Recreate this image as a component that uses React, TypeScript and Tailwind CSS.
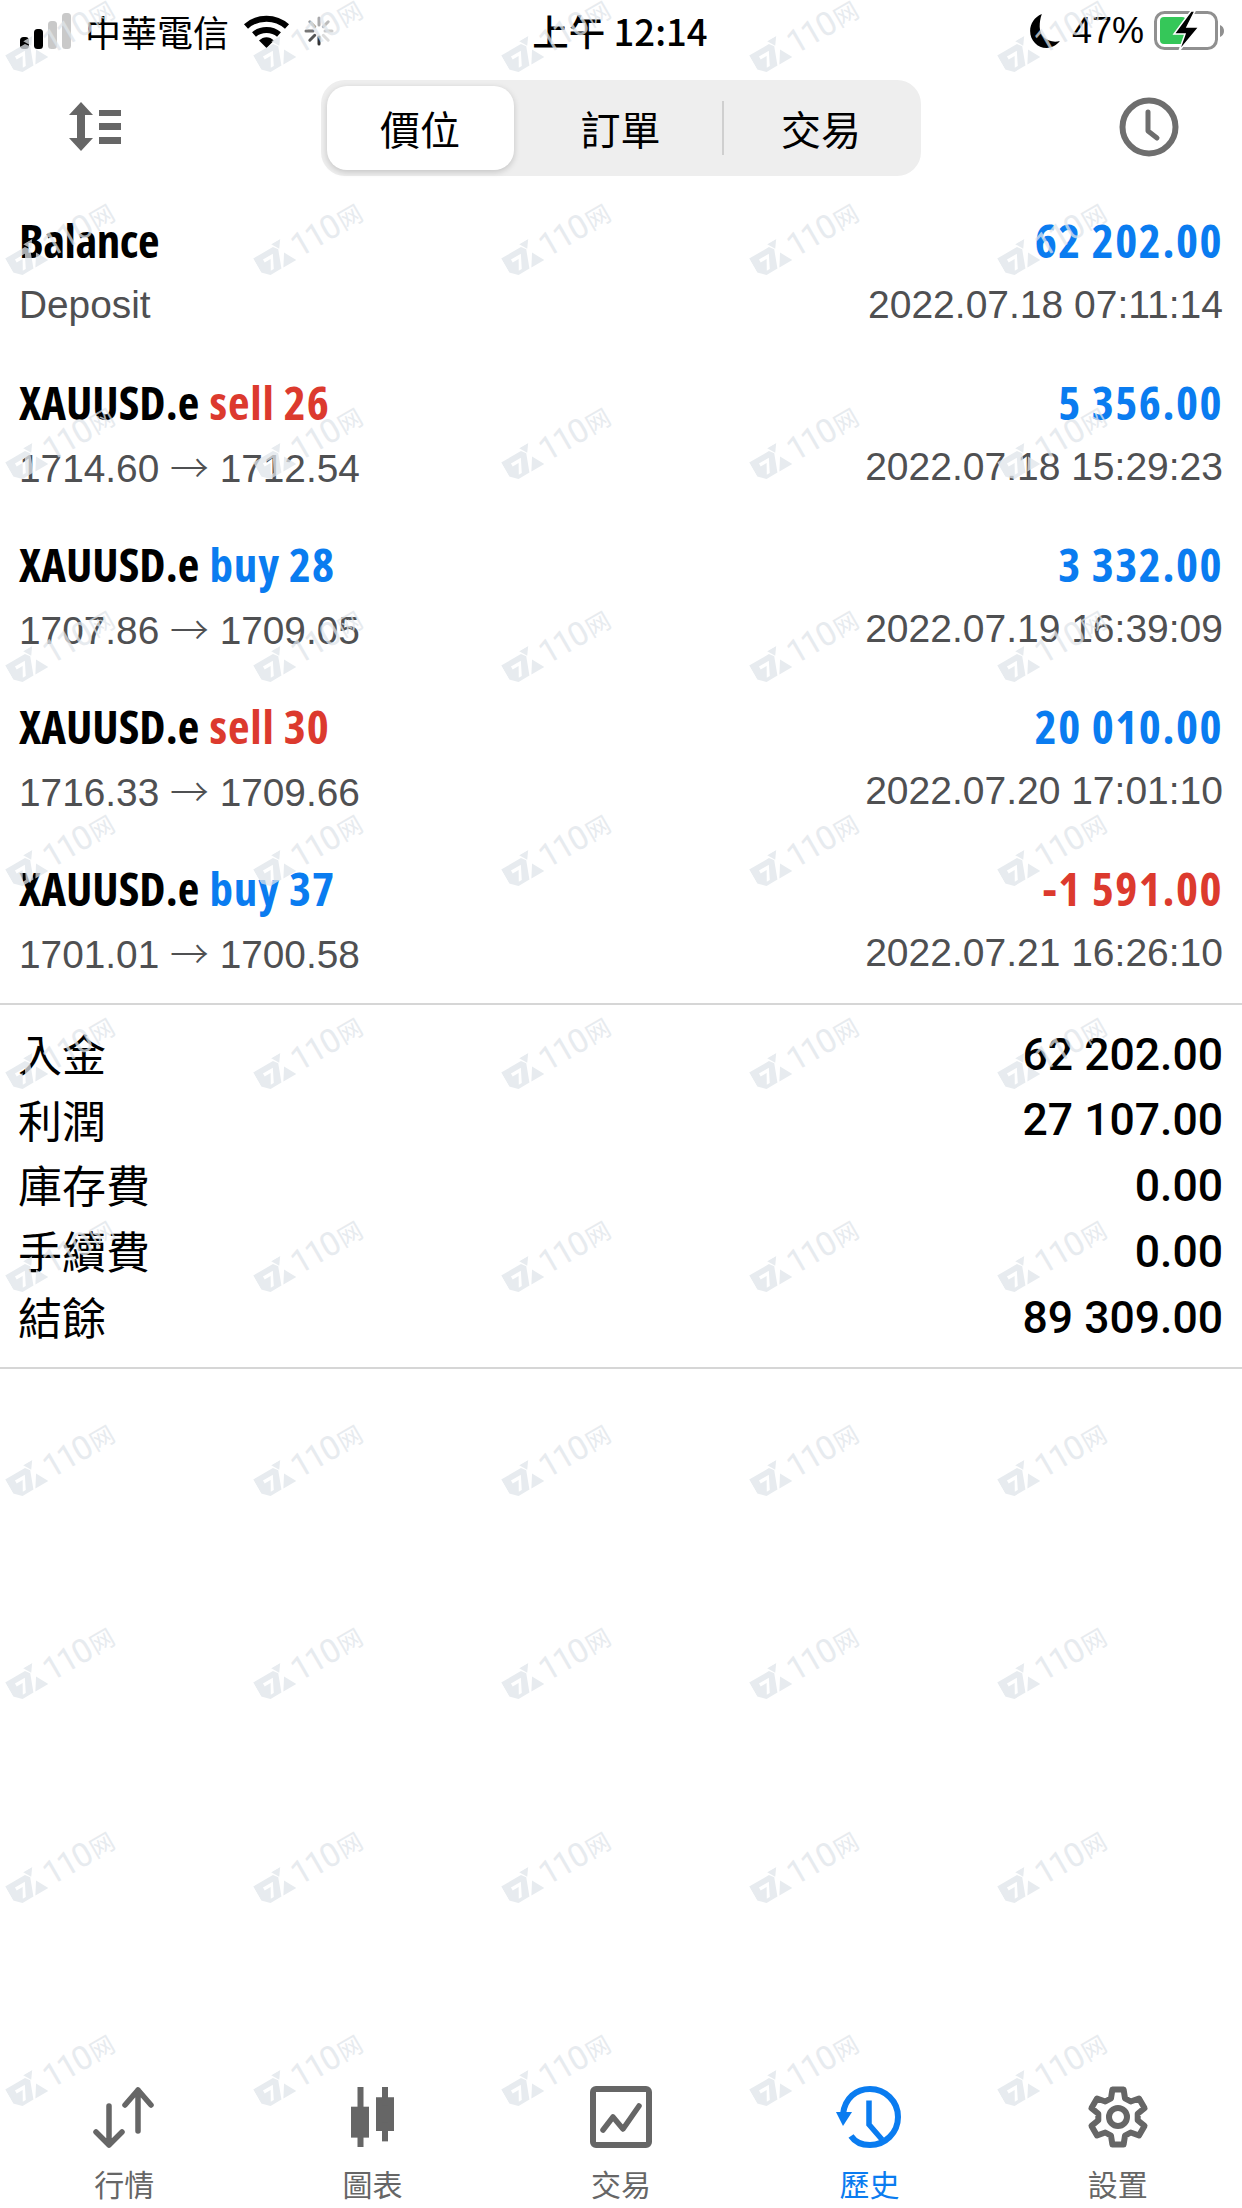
import { Fragment } from 'react';

const sans = "font-['Liberation_Sans','Noto_Sans_CJK_TC',sans-serif]";
const cjk = "font-['Noto_Sans_CJK_TC',sans-serif]";

type Trade = {
  symbol: string;
  side?: string;
  sideColor?: string;
  amount: string;
  amountColor: string;
  from?: string;
  to?: string;
  sub?: string;
  time: string;
};

const trades: Trade[] = [
  { symbol: 'Balance', amount: '62 202.00', amountColor: 'text-[#0a7cf0]', sub: 'Deposit', time: '2022.07.18 07:11:14' },
  { symbol: 'XAUUSD.e', side: 'sell 26', sideColor: 'text-[#dc3a2e]', amount: '5 356.00', amountColor: 'text-[#0a7cf0]', from: '1714.60', to: '1712.54', time: '2022.07.18 15:29:23' },
  { symbol: 'XAUUSD.e', side: 'buy 28', sideColor: 'text-[#0a7cf0]', amount: '3 332.00', amountColor: 'text-[#0a7cf0]', from: '1707.86', to: '1709.05', time: '2022.07.19 16:39:09' },
  { symbol: 'XAUUSD.e', side: 'sell 30', sideColor: 'text-[#dc3a2e]', amount: '20 010.00', amountColor: 'text-[#0a7cf0]', from: '1716.33', to: '1709.66', time: '2022.07.20 17:01:10' },
  { symbol: 'XAUUSD.e', side: 'buy 37', sideColor: 'text-[#0a7cf0]', amount: '-1 591.00', amountColor: 'text-[#dc3a2e]', from: '1701.01', to: '1700.58', time: '2022.07.21 16:26:10' },
];

const summary = [
  ['入金', '62 202.00'],
  ['利潤', '27 107.00'],
  ['庫存費', '0.00'],
  ['手續費', '0.00'],
  ['結餘', '89 309.00'],
];

function gearPath(cx: number, cy: number, outer: number, inner: number) {
  const pts: string[] = [];
  for (let i = 0; i < 6; i++) {
    const a = (i * Math.PI) / 3 - Math.PI / 2;
    const at = (r: number, d: number) => `${(cx + r * Math.cos(a + d)).toFixed(1)} ${(cy + r * Math.sin(a + d)).toFixed(1)}`;
    pts.push(at(inner, -0.36), at(outer, -0.2), at(outer, 0.2), at(inner, 0.36));
  }
  return `M${pts.join('L')}Z`;
}

function SignalIcon() {
  return (
    <svg width="54" height="36" viewBox="0 0 54 36">
      <rect x="0" y="24" width="9" height="12" rx="3.5" fill="#000" />
      <rect x="14" y="16" width="9" height="20" rx="3.5" fill="#000" />
      <rect x="28" y="8" width="9" height="28" rx="3.5" fill="#c9c9c9" />
      <rect x="42" y="0" width="9" height="36" rx="3.5" fill="#c9c9c9" />
    </svg>
  );
}

function WifiIcon() {
  return (
    <svg width="47" height="34" viewBox="0 0 47 34">
      <path d="M3 12.5C14.5 2 32.5 2 44 12.5" fill="none" stroke="#000" strokeWidth="6" />
      <path d="M11 20.5C18 14.5 29 14.5 36 20.5" fill="none" stroke="#000" strokeWidth="6" />
      <path d="M16 26.5C20.5 22 26.5 22 31 26.5L23.5 34Z" fill="#000" />
    </svg>
  );
}

function SpinnerIcon() {
  const shades = ['#333', '#555', '#777', '#999', '#aaa', '#bbb', '#ccc', '#ddd'];
  return (
    <svg width="30" height="30" viewBox="-15 -15 30 30">
      {shades.map((c, i) => (
        <line key={i} x1="0" y1="-6" x2="0" y2="-13" stroke={c} strokeWidth="3" strokeLinecap="round" transform={`rotate(${180 + i * 45})`} />
      ))}
    </svg>
  );
}

function MoonIcon() {
  return (
    <svg width="30" height="34" viewBox="0 0 28 32">
      <path d="M11 0C4 3 0 9 0 16c0 9 7 16 15.500 16 5 0 9.500-2.500 12.500-6.500-1.500.5-3 .5-4.500.5C15.500 26 9 20 9 12c0-4 .5-8 2-12Z" fill="#000" />
    </svg>
  );
}

function BatteryIcon() {
  return (
    <svg width="70" height="40" viewBox="0 0 70 40">
      <rect x="1.500" y="1.500" width="61" height="36" rx="9" fill="none" stroke="#909090" strokeWidth="3" />
      <rect x="6" y="6" width="26" height="27" rx="4" fill="#35c759" />
      <path d="M66 14c2.500 1 4 3 4 6s-1.500 5-4 6Z" fill="#909090" />
      <path d="M37 0 20 23h11l-6 17 20-24H33l8-16Z" fill="#000" stroke="#fff" strokeWidth="1.500" />
    </svg>
  );
}

function SortIcon() {
  return (
    <svg width="54" height="49" viewBox="0 0 54 49">
      <path d="M13 0l12 13H17v23h8L13 49 1 36h8V13H1Z" fill="#666" />
      <rect x="31" y="8" width="22" height="6" fill="#666" />
      <rect x="31" y="21" width="22" height="7" fill="#666" />
      <rect x="31" y="35" width="22" height="7" fill="#666" />
    </svg>
  );
}

function ClockIcon() {
  return (
    <svg width="60" height="60" viewBox="0 0 60 60">
      <circle cx="30" cy="30" r="26.500" fill="none" stroke="#6e6e6e" strokeWidth="6" />
      <path d="M29 15v19l9 7" fill="none" stroke="#6e6e6e" strokeWidth="5" strokeLinecap="round" strokeLinejoin="round" />
    </svg>
  );
}

function QuotesIcon() {
  return (
    <svg width="62" height="62" viewBox="0 0 62 62" fill="none" stroke="#666" strokeWidth="5.500" strokeLinecap="round" strokeLinejoin="round">
      <path d="M16 20v39M3 46l13 13 13-13" />
      <path d="M45 4v41M32 19 45 4l13 15" />
    </svg>
  );
}

function CandlesIcon() {
  return (
    <svg width="44" height="60" viewBox="0 0 44 64" fill="#666" preserveAspectRatio="none">
      <rect x="6.500" y="0" width="6" height="64" />
      <rect x="0" y="21" width="18" height="33" />
      <rect x="31" y="0" width="6" height="58" />
      <path fillRule="evenodd" d="M25 11h18v36H25ZM31 20v18h6V20Z" />
    </svg>
  );
}

function TradeIcon() {
  return (
    <svg width="62" height="62" viewBox="0 0 62 62" fill="none" stroke="#666" strokeLinecap="round" strokeLinejoin="round">
      <rect x="3" y="3" width="56" height="56" rx="3" strokeWidth="6" />
      <path d="M13 44 23 31l10 12L49 20" strokeWidth="5.500" />
    </svg>
  );
}

function HistoryIcon() {
  return (
    <svg width="66" height="62" viewBox="0 0 66 62" fill="none" stroke="#0a7cf0" strokeWidth="6">
      <path d="M7 28C9 12 20 3 34 3c15 0 28 12 28 28S49 59 34 59c-8 0-15-3-19-9" />
      <path d="M33 15v24l13 15" transform="translate(0 -0.500)" strokeWidth="5.500" />
      <path d="M0 26h16L7 40Z" fill="#0a7cf0" stroke="none" />
    </svg>
  );
}

function GearIcon() {
  return (
    <svg width="62" height="64" viewBox="0 0 62 64" fill="none" stroke="#666" strokeWidth="6" strokeLinejoin="round">
      <path d={gearPath(31, 32, 28, 20)} />
      <circle cx="31" cy="32" r="9" />
    </svg>
  );
}

const tabs = [
  { label: '行情', icon: <QuotesIcon />, color: 'text-[#666]' },
  { label: '圖表', icon: <CandlesIcon />, color: 'text-[#666]' },
  { label: '交易', icon: <TradeIcon />, color: 'text-[#666]' },
  { label: '歷史', icon: <HistoryIcon />, color: 'text-[#0a7cf0]' },
  { label: '設置', icon: <GearIcon />, color: 'text-[#666]' },
];

function Watermark() {
  return (
    <div className="flex items-center shrink-0 -rotate-30 text-[#dfe5ea] w-[114px]">
      <svg width="40" height="30" viewBox="0 0 35 26" fill="#dfe5ea" className="shrink-0">
        <path fillRule="evenodd" d="M0 3h20l3 4-6 16H6L0 17ZM7 8v3h6l-5 9h3l6-12Z" />
        <path d="M20 0h9l-5 7ZM26 12l6 11H19Z" />
      </svg>
      <span className="font-['Roboto',sans-serif] text-[33px] leading-none tracking-[-2px]">110</span>
      <span className={`${cjk} text-[24px] leading-none ml-[3px]`}>网</span>
    </div>
  );
}

function WatermarkLayer() {
  const cells = Array.from({ length: 55 });
  return (
    <div className="absolute inset-0 overflow-hidden pointer-events-none opacity-75">
      <div className="grid grid-cols-[repeat(5,248px)] auto-rows-[203.400px] ml-[6px] -mt-[1px]">
        {cells.map((_, i) => (
          <div key={i} className="flex w-[108px] h-[75px] items-center justify-center">
            <Watermark />
          </div>
        ))}
      </div>
    </div>
  );
}

export default function App() {
  return (
    <div className={`relative flex flex-col w-[1242px] h-[2208px] overflow-hidden bg-white text-black ${sans}`}>
      {/* status bar */}
      <div className="flex items-center h-[62px] pl-[20px] pr-[18px] text-[36px]">
        <div className="flex flex-1 items-center">
          <SignalIcon />
          <span className={`${cjk} ml-[11px]`}>中華電信</span>
          <div className="ml-[14px]"><WifiIcon /></div>
          <div className="ml-[14px]"><SpinnerIcon /></div>
        </div>
        <div className={`${cjk} font-medium text-[36.500px] -ml-[4px]`}>上午 12:14</div>
        <div className="flex flex-1 items-center justify-end">
          <MoonIcon />
          <span className="ml-[12px]">47%</span>
          <div className="ml-[10px]"><BatteryIcon /></div>
        </div>
      </div>

      {/* header */}
      <div className="flex items-center justify-between mt-[18px] h-[96px] pl-[68px] pr-[63px]">
        <div className="-mt-[3px]"><SortIcon /></div>
        <div className={`flex items-center w-[600px] h-[96px] rounded-[24px] bg-[#eeeeee] px-[6px] text-[40px] ${cjk}`}>
          <div className="flex items-center justify-center w-[187px] h-[84px] rounded-[20px] bg-white shadow-[0_2px_6px_rgba(0,0,0,0.18)]">價位</div>
          <div className="flex items-center justify-center w-[208px] pl-[6px]">訂單</div>
          <div className="w-[2px] h-[54px] bg-[#cfcfcf]" />
          <div className="flex items-center justify-center flex-1 pl-[4px]">交易</div>
        </div>
        <div className="-mt-[2px]"><ClockIcon /></div>
      </div>

      {/* trades */}
      <div className="flex flex-col mt-[32px]">
        {trades.map((t, i) => (
          <div key={i} className="flex flex-col h-[162px] pl-[19px] pr-[19px]">
            <div className="flex justify-between h-[64px] items-center text-[47px] font-bold font-['Open_Sans',sans-serif] [font-stretch:75%]">
              <span className={`whitespace-nowrap ${t.side ? '' : 'tracking-[-0.500px]'}`}>
                {t.symbol}
                {t.side && <Fragment> <span className={`ml-[2px] tracking-[0.800px] ${t.sideColor}`}>{t.side}</span></Fragment>}
              </span>
              <span className={`whitespace-nowrap tracking-[1.500px] ${t.amountColor}`}>{t.amount}</span>
            </div>
            <div className="flex justify-between h-[64px] pt-[2px] items-center text-[39px] text-[#4f5052]">
              <span className="whitespace-nowrap text-[38.800px]">
                {t.sub ?? (
                  <Fragment>
                    {t.from} <span className={`${cjk} font-light`}>→</span> {t.to}
                  </Fragment>
                )}
              </span>
              <span className="whitespace-nowrap">{t.time}</span>
            </div>
          </div>
        ))}
      </div>

      {/* summary */}
      <div className="flex flex-col border-y-2 border-[#d6d6d6] mt-[-15px] h-[366px] pl-[18px] pr-[19px] pt-[16px]">
        {summary.map(([label, value]) => (
          <div key={label} className="flex justify-between items-center h-[65.800px]">
            <span className={`${cjk} text-[44px] -mt-[2px]`}>{label}</span>
            <span className="font-['Roboto',sans-serif] font-medium text-[44.500px] pt-[2px]">{value}</span>
          </div>
        ))}
      </div>

      <div className="flex-1" />

      {/* tab bar */}
      <div className="grid grid-cols-5 h-[128px] pb-[6px]">
        {tabs.map((t) => (
          <div key={t.label} className="flex flex-col items-center justify-between">
            <div className="flex items-center h-[66px] mt-[4px]">{t.icon}</div>
            <span className={`${cjk} text-[30px] leading-[38px] ${t.color}`}>{t.label}</span>
          </div>
        ))}
      </div>

      <WatermarkLayer />
    </div>
  );
}
